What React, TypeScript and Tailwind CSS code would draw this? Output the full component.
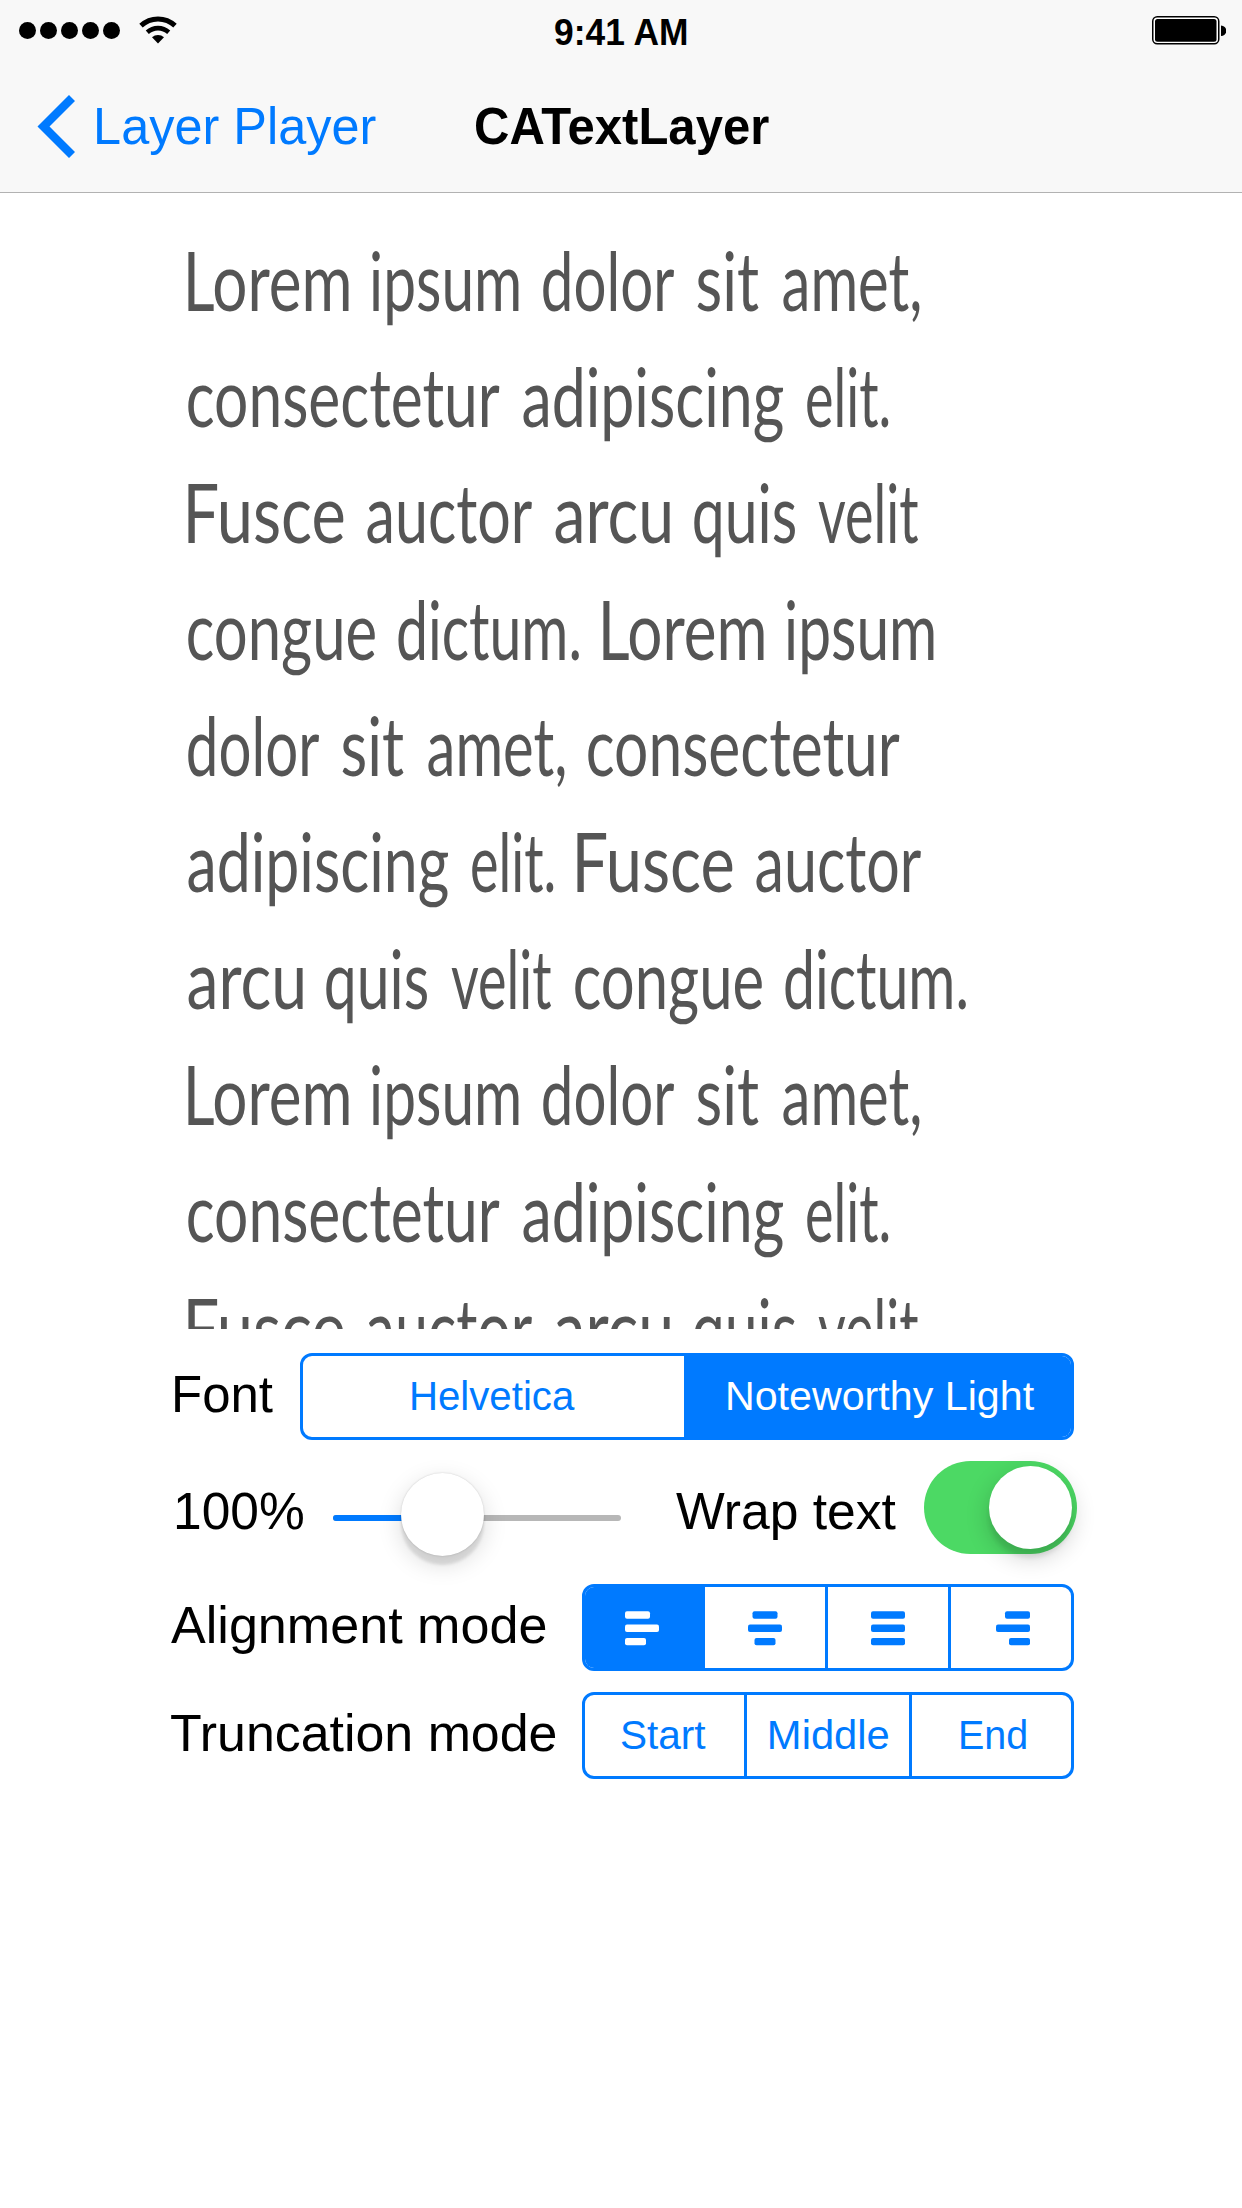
import { useLayoutEffect, useRef, useState } from "react";
import type { ReactNode } from "react";

const SANS = "font-['Liberation_Sans',sans-serif]";

/** Single-line text whose ink spans exactly `width` pixels. */
function FitText({ text, width, className = "" }: { text: string; width: number; className?: string }) {
  const ref = useRef<HTMLSpanElement>(null);
  const [transform, setTransform] = useState("none");

  useLayoutEffect(() => {
    const el = ref.current;
    const ctx = document.createElement("canvas").getContext("2d");
    if (!el || !ctx) return;
    const style = getComputedStyle(el);
    ctx.font = `${style.fontWeight} ${style.fontSize} ${style.fontFamily}`;
    const m = ctx.measureText(text);
    const scale = width / (m.actualBoundingBoxRight + m.actualBoundingBoxLeft);
    setTransform(`translateX(${m.actualBoundingBoxLeft * scale}px) scaleX(${scale})`);
  }, [text, width]);

  return (
    <span className={`block shrink-0 whitespace-nowrap ${className}`} style={{ width }}>
      <span ref={ref} className="inline-block origin-left" style={{ transform }}>
        {text}
      </span>
    </span>
  );
}

const WORD_WIDTHS: Record<string, number> = {
  Lorem: 161,
  ipsum: 147,
  dolor: 131,
  sit: 62,
  "amet,": 137,
  consectetur: 311.5,
  adipiscing: 260.5,
  "elit.": 81.5,
  Fusce: 155.5,
  auctor: 165,
  arcu: 115,
  quis: 101,
  velit: 100.5,
  congue: 187,
  "dictum.": 181,
};

const LINES = [
  "Lorem ipsum dolor sit amet,",
  "consectetur adipiscing elit.",
  "Fusce auctor arcu quis velit",
  "congue dictum. Lorem ipsum",
  "dolor sit amet, consectetur",
  "adipiscing elit. Fusce auctor",
  "arcu quis velit congue dictum.",
  "Lorem ipsum dolor sit amet,",
  "consectetur adipiscing elit.",
  "Fusce auctor arcu quis velit",
];

function StatusBar() {
  return (
    <div className="grid h-[60px] grid-cols-3">
      <div className="flex items-start pl-[19px]">
        <div className="flex gap-[4px] pt-[22px]">
          {[0, 1, 2, 3, 4].map((i) => (
            <div key={i} className="size-[17px] rounded-full bg-black" />
          ))}
        </div>
        <svg className="mt-[15px] ml-[19px] h-[29px] w-[38px]" viewBox="0 0 38 29">
          <path d="M2 10.6a25 25 0 0 1 34 0" fill="none" stroke="#000" strokeWidth="5" />
          <path d="M8.3 17.2a16 16 0 0 1 21.4 0" fill="none" stroke="#000" strokeWidth="4.6" />
          <path d="M13 22.3a9 9 0 0 1 12 0L19 28.5z" fill="#000" />
        </svg>
      </div>
      <div className="flex justify-center pt-[5px]">
        <FitText text="9:41 AM" width={133} className="text-[37px] leading-[56px] font-bold" />
      </div>
      <div className="flex justify-end pt-[16px] pr-[16px]">
        <svg className="h-[29px] w-[74px]" viewBox="0 0 74 29">
          <rect x="0.75" y="0.75" width="66" height="27" rx="4.5" fill="#fff" stroke="#000" strokeWidth="1.5" />
          <rect x="3" y="3" width="61.5" height="22.8" rx="2.5" fill="#000" />
          <path d="M69 9.5a5 5 0 0 1 0 10.5z" fill="#000" />
        </svg>
      </div>
    </div>
  );
}

function NavBar() {
  return (
    <div className="grid h-[133px] grid-cols-[476px_293px_1fr] items-center border-b border-[#b2b2b2]">
      <button className="flex items-center gap-[22px] pl-[37px] text-[#007aff]">
        <svg className="h-[63px] w-[38px]" viewBox="0 0 38 63">
          <path d="M35 3L6.5 31.5 35 60" fill="none" stroke="currentColor" strokeWidth="8.5" />
        </svg>
        <FitText text="Layer Player" width={279} className="text-left text-[52px] leading-[132px]" />
      </button>
      <FitText text="CATextLayer" width={293} className="text-[52px] leading-[132px] font-bold" />
    </div>
  );
}

function Segments({ className = "", children }: { className?: string; children: ReactNode }) {
  return (
    <div
      className={`flex h-[87px] shrink-0 divide-x-3 divide-[#007aff] overflow-hidden rounded-[12px] border-3 border-[#007aff] text-[40px] leading-[81px] text-[#007aff] ${className}`}
    >
      {children}
    </div>
  );
}

type Bar = [x: number, w: number];

function AlignIcon({ bars }: { bars: [Bar, Bar, Bar] }) {
  return (
    <svg className="mt-[2px] h-[35px] w-[34px]" viewBox="0 0 34 35">
      {bars.map(([x, w], i) => (
        <rect key={i} x={x} y={i * 13.3 + 0.3} width={w} height="7.4" rx="2" fill="currentColor" />
      ))}
    </svg>
  );
}

const LABEL = "text-[52px] leading-[78px] text-black";

export default function App() {
  return (
    <div className={`min-h-[2208px] w-[1242px] bg-white text-black ${SANS}`}>
      <header className="bg-[#f8f8f8]">
        <StatusBar />
        <NavBar />
      </header>

      <section className="mt-[28.5px] h-[1107.5px] overflow-hidden pl-[187.5px] font-['Lato',sans-serif] text-[81px] leading-[116.4px] text-[#555]">
        {LINES.map((line, i) => (
          <div key={i} className="flex h-[116.4px] gap-[23.5px]">
            {line.split(" ").map((word, j) => (
              <FitText key={j} text={word} width={WORD_WIDTHS[word]} />
            ))}
          </div>
        ))}
      </section>

      <section className="flex w-[1077px] flex-col pt-[24px]">
        <div className="flex items-start justify-between pr-[3px] pl-[174.5px]">
          <FitText text="Font" width={98.5} className={`mt-[2px] ${LABEL}`} />
          <Segments className="w-[774px]">
            <div className="flex w-[384px] justify-center">
              <FitText text="Helvetica" width={163} />
            </div>
            <div className="flex flex-1 justify-center bg-[#007aff] pl-[4px] text-white">
              <FitText text="Noteworthy Light" width={306} />
            </div>
          </Segments>
        </div>

        <div className="mt-[21px] flex h-[93px] items-start pl-[176px]">
          <FitText text="100%" width={127.5} className={`mt-[11px] ${LABEL}`} />
          <div className="relative mt-[54px] ml-[29.5px] flex h-[6px] w-[288px] shrink-0 overflow-visible rounded-full bg-[#b7b7b7]">
            <div className="h-full w-[100px] rounded-l-full bg-[#007aff]" />
            <div className="absolute -top-[42.5px] left-[68px] size-[83px] rounded-full bg-white shadow-[0_0_2px_rgba(0,0,0,0.18),0_9px_3px_rgba(0,0,0,0.1),0_8px_24px_rgba(0,0,0,0.15)]" />
          </div>
          <FitText text="Wrap text" width={220.5} className={`mt-[11px] ml-[55px] ${LABEL}`} />
          <div className="ml-auto flex h-[93px] w-[153px] justify-end rounded-full bg-[#4cd964] p-[5px]">
            <div className="size-[83px] rounded-full bg-white shadow-[0_9px_4px_rgba(0,0,0,0.08),0_8px_24px_rgba(0,0,0,0.2)]" />
          </div>
        </div>

        <div className="mt-[30px] flex items-start justify-between pr-[3px] pl-[171px]">
          <FitText text="Alignment mode" width={374.5} className={`mt-[2px] ${LABEL}`} />
          <Segments className="w-[492px]">
            <div className="flex w-[120px] items-center bg-[#007aff] pl-[40px] text-white">
              <AlignIcon bars={[[0, 25], [0, 34], [0, 21]]} />
            </div>
            <div className="flex w-[123px] items-center pl-[43px]">
              <AlignIcon bars={[[4.5, 25], [0, 34], [6.5, 21]]} />
            </div>
            <div className="flex w-[123px] items-center pl-[43px]">
              <AlignIcon bars={[[0, 34], [0, 34], [0, 34]]} />
            </div>
            <div className="flex flex-1 items-center pl-[45px]">
              <AlignIcon bars={[[9, 25], [0, 34], [13, 21]]} />
            </div>
          </Segments>
        </div>

        <div className="mt-[21px] flex items-start justify-between pr-[3px] pl-[171px]">
          <FitText text="Truncation mode" width={384.5} className={`mt-[2px] ${LABEL}`} />
          <Segments className="w-[492px]">
            <div className="flex w-[162px] justify-center pr-[2px]">
              <FitText text="Start" width={84.5} />
            </div>
            <div className="flex w-[165px] justify-center pl-[3px]">
              <FitText text="Middle" width={118.5} />
            </div>
            <div className="flex flex-1 justify-center pl-[4px]">
              <FitText text="End" width={65} />
            </div>
          </Segments>
        </div>
      </section>
    </div>
  );
}
